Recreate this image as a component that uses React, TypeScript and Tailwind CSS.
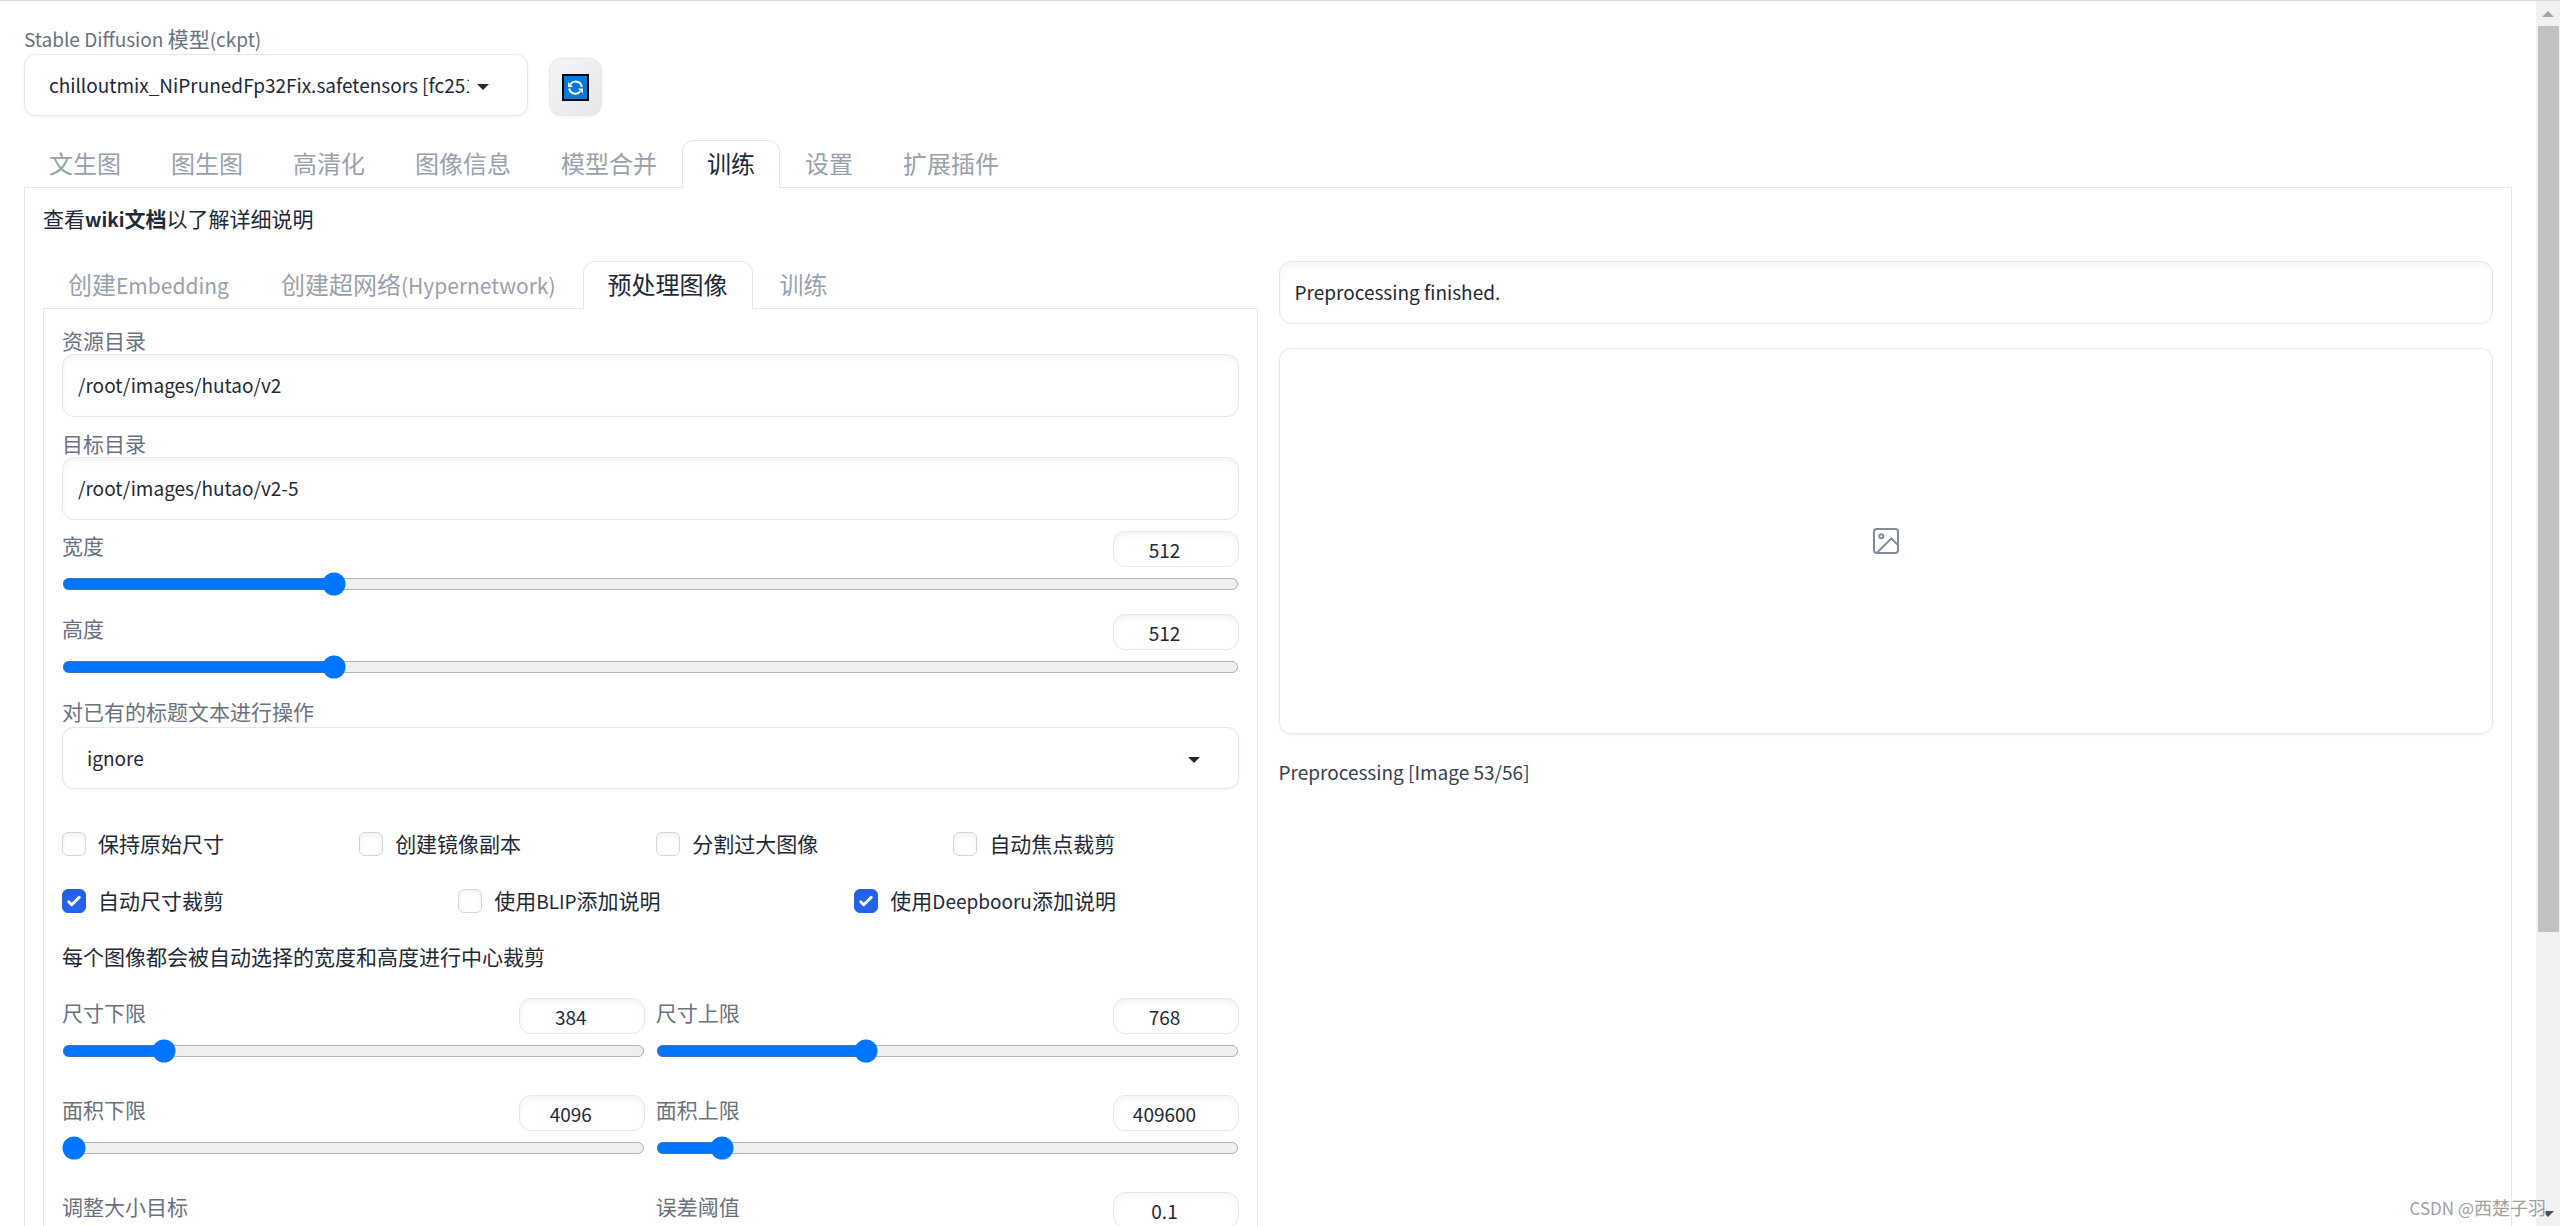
import { useState } from 'react';
import type { ReactNode } from 'react';
import clsx from 'clsx';

const mainTabs = ['文生图', '图生图', '高清化', '图像信息', '模型合并', '训练', '设置', '扩展插件'];
const trainTabs = ['创建Embedding', '创建超网络(Hypernetwork)', '预处理图像', '训练'];

const optionRows = [
    {
        cols: 'grid-cols-4',
        items: [
            { label: '保持原始尺寸', checked: false },
            { label: '创建镜像副本', checked: false },
            { label: '分割过大图像', checked: false },
            { label: '自动焦点裁剪', checked: false },
        ],
    },
    {
        cols: 'grid-cols-3',
        items: [
            { label: '自动尺寸裁剪', checked: true },
            { label: '使用BLIP添加说明', checked: false },
            { label: '使用Deepbooru添加说明', checked: true },
        ],
    },
];

// Latin runs are set slightly smaller than the Chinese around them
const Mixed = ({ text, latin = 'text-[19px]' }: { text: string; latin?: string }) => (
    <>
        {text.split(/([\x20-\x7e]+)/).map((part, idx) => (
            idx % 2 ? <span key={idx} className={clsx('leading-none', latin)}>{part}</span> : part
        ))}
    </>
);

type TabsProps = { items: string[]; active: string; onSelect: (tab: string) => void; className?: string };

const Tabs = ({ items, active, onSelect, className }: TabsProps) => (
    <div role="tablist" className={clsx('relative z-10 -mb-px flex', className)}>
        {items.map((tab) => (
            <button
                key={tab}
                role="tab"
                aria-selected={tab === active}
                onClick={() => onSelect(tab)}
                className={clsx(
                    'h-12 px-6 pb-1 text-2xl leading-none rounded-t-xl border border-b-0 whitespace-nowrap',
                    tab === active ? 'border-gray-200 bg-white text-gray-800' : 'border-transparent text-gray-400'
                )}
            >
                <Mixed text={tab} latin="text-[21px]" />
            </button>
        ))}
    </div>
);

const TextField = ({ id, label, value }: { id: string; label: string; value: string }) => (
    <div className="flex flex-col">
        <label htmlFor={id} className="leading-7 text-gray-500"><Mixed text={label} /></label>
        <input
            id={id}
            type="text"
            defaultValue={value}
            className="h-[63px] w-full rounded-xl border border-gray-200 bg-white px-[15px] pb-0.5 text-[19px] text-gray-800 shadow-[inset_0_3px_6px_rgba(0,0,0,0.05)]"
        />
    </div>
);

const SelectField = ({ id, label, options }: { id: string; label: string; options: string[] }) => (
    <div className="flex flex-col">
        <label htmlFor={id} className="pb-0.5 leading-7 text-gray-500"><Mixed text={label} /></label>
        <div className="relative">
            <select
                id={id}
                className="h-[62px] w-full appearance-none rounded-xl border border-gray-200 bg-white pl-6 pr-[58px] text-[19px] text-gray-800 shadow-[0_1px_3px_rgba(0,0,0,0.06)]"
            >
                {options.map((option) => <option key={option}>{option}</option>)}
            </select>
            <svg viewBox="0 0 12 6" className="pointer-events-none absolute right-[39px] top-[30px] h-1.5 w-3 fill-gray-800">
                <path d="M0 0h12L6 6z" />
            </svg>
        </div>
    </div>
);

type SliderProps = { id: string; label: string; value: number; min?: number; max: number; step?: number };

const SliderField = ({ id, label, value: initial, min = 0, max, step = 1 }: SliderProps) => {
    const [value, setValue] = useState(initial);

    return (
        <div className="flex flex-col gap-[5px]">
            <div className="flex items-start justify-between">
                <label htmlFor={id} className="leading-7 text-gray-500">{label}</label>
                <input
                    type="number"
                    aria-label={label}
                    value={value}
                    step={step}
                    onChange={(e) => setValue(Number(e.target.value))}
                    className="h-9 w-[126px] appearance-none rounded-xl border border-gray-200 bg-white pl-0 pr-[22px] text-center text-[19px] text-gray-800 shadow-[inset_0_3px_6px_rgba(0,0,0,0.05)] [-moz-appearance:textfield] [&::-webkit-inner-spin-button]:appearance-none"
                />
            </div>
            <input
                id={id}
                type="range"
                min={min}
                max={max}
                step={step}
                value={value}
                onChange={(e) => setValue(Number(e.target.value))}
                className="block h-4 w-full [zoom:1.5]"
            />
        </div>
    );
};

const CheckOption = ({ label, checked }: { label: string; checked: boolean }) => (
    <label className="flex h-6 items-center gap-3 whitespace-nowrap leading-6">
        <span className="grid size-6 shrink-0">
            <input
                type="checkbox"
                defaultChecked={checked}
                className="peer col-start-1 row-start-1 size-6 appearance-none rounded-md border border-gray-300 bg-white shadow-[inset_0_3px_6px_rgba(0,0,0,0.05)] checked:border-[#2563eb] checked:bg-[#2563eb]"
            />
            <svg viewBox="0 0 16 16" className="pointer-events-none invisible col-start-1 row-start-1 size-6 fill-white peer-checked:visible">
                <path d="M12.207 4.793a1 1 0 010 1.414l-5 5a1 1 0 01-1.414 0l-2-2a1 1 0 011.414-1.414L6.5 9.086l4.293-4.293a1 1 0 011.414 0z" />
            </svg>
        </span>
        <span className="pb-0.5"><Mixed text={label} /></span>
    </label>
);

const Panel = ({ className, children }: { className?: string; children: ReactNode }) => (
    <div className={clsx('flex-1 border border-b-0 border-gray-200 px-[18px]', className)}>{children}</div>
);

const RefreshIcon = () => (
    <svg viewBox="0 0 27 27" className="size-[27px]">
        <rect width="27" height="27" fill="#000" />
        <rect x="2" y="2" width="23" height="23" fill="#0078d7" />
        <g fill="none" stroke="#fff" strokeWidth="2">
            <path d="M8.5 10.2A6.3 6.3 0 0 1 19.8 13" />
            <path d="M7.2 14.5A6.3 6.3 0 0 0 18.3 17.3" />
        </g>
        <g fill="#fff">
            <path d="M6 8v5h5z" />
            <path d="M21 19.5v-5h-5z" />
        </g>
    </svg>
);

const ScrollBar = () => (
    <div aria-hidden="true" className="flex w-6 shrink-0 flex-col items-center bg-[#f1f1f1]">
        <div className="flex h-[25px] items-center">
            <svg viewBox="0 0 12 6" className="h-1.5 w-3 fill-[#a3a3a3]"><path d="M6 0l6 6H0z" /></svg>
        </div>
        <div className="flex w-full flex-1 flex-col pl-0.5 pr-px">
            <div className="h-[77%] bg-[#c1c1c1]" />
        </div>
        <div className="flex h-6 items-center">
            <svg viewBox="0 0 12 6" className="h-1.5 w-3 fill-[#505050]"><path d="M0 0h12L6 6z" /></svg>
        </div>
    </div>
);

export default function App() {
    const [mainTab, setMainTab] = useState('训练');
    const [trainTab, setTrainTab] = useState('预处理图像');

    return (
        <div className="relative flex h-screen overflow-hidden border-t border-[#d9d9d9] bg-white font-['Noto_Sans_CJK_SC',sans-serif] text-[21px] text-gray-800">
            <main className="flex min-w-0 flex-1 flex-col overflow-hidden px-6 pt-[23px]">
                <div className="flex items-end gap-[21px]">
                    <div className="w-[504px]">
                        <SelectField
                            id="checkpoint"
                            label="Stable Diffusion 模型(ckpt)"
                            options={['chilloutmix_NiPrunedFp32Fix.safetensors [fc2511737a]']}
                        />
                    </div>
                    <button
                        aria-label="刷新"
                        className="flex h-[58px] w-[53px] items-center justify-center rounded-xl border border-gray-200 bg-linear-to-br from-gray-100 to-gray-200 shadow-[0_1px_3px_rgba(0,0,0,0.06)]"
                    >
                        <RefreshIcon />
                    </button>
                </div>

                <div className="mt-6 flex flex-1 flex-col">
                    <Tabs items={mainTabs} active={mainTab} onSelect={setMainTab} />
                    <Panel className="flex flex-col gap-[29px] pt-4">
                        <p className="leading-7">
                            查看<a href="#wiki" className="font-bold"><Mixed text="wiki文档" /></a>以了解详细说明
                        </p>

                        <div className="flex flex-1 gap-[21px]">
                            <section className="flex flex-1 flex-col">
                                <Tabs items={trainTabs} active={trainTab} onSelect={setTrainTab} className="gap-0.5" />
                                <Panel className="pt-[17px]">
                                    <div className="flex flex-col gap-3">
                                        <TextField id="source-dir" label="资源目录" value="/root/images/hutao/v2" />
                                        <TextField id="target-dir" label="目标目录" value="/root/images/hutao/v2-5" />
                                    </div>

                                    <div className="mt-[11px] flex flex-col gap-[18px]">
                                        <SliderField id="width" label="宽度" value={512} min={64} max={2048} />
                                        <SliderField id="height" label="高度" value={512} min={64} max={2048} />
                                        <SelectField id="caption-action" label="对已有的标题文本进行操作" options={['ignore', 'copy', 'prepend', 'append']} />
                                    </div>

                                    <div className="mt-[43px] flex flex-col gap-[33px]">
                                        {optionRows.map((row) => (
                                            <div key={row.cols} className={clsx('grid gap-3', row.cols)}>
                                                {row.items.map((item) => <CheckOption key={item.label} {...item} />)}
                                            </div>
                                        ))}
                                    </div>

                                    <p className="mt-[29px] leading-7">每个图像都会被自动选择的宽度和高度进行中心裁剪</p>

                                    <div className="mt-7 grid grid-cols-2 gap-x-[11px] gap-y-8">
                                        <SliderField id="min-size" label="尺寸下限" value={384} min={64} max={2048} />
                                        <SliderField id="max-size" label="尺寸上限" value={768} min={64} max={2048} />
                                        <SliderField id="min-area" label="面积下限" value={4096} min={4096} max={4194304} />
                                        <SliderField id="max-area" label="面积上限" value={409600} min={4096} max={4194304} />
                                        <span className="leading-7 text-gray-500">调整大小目标</span>
                                        <SliderField id="threshold" label="误差阈值" value={0.1} max={1} step={0.01} />
                                    </div>
                                </Panel>
                            </section>

                            <section className="flex flex-1 flex-col">
                                <input
                                    type="text"
                                    aria-label="输出"
                                    readOnly
                                    value="Preprocessing finished."
                                    className="h-[63px] w-full shrink-0 rounded-xl border border-gray-200 bg-white px-[15px] pb-0.5 text-[19px] text-gray-800 shadow-[inset_0_3px_6px_rgba(0,0,0,0.05)]"
                                />
                                <div className="mt-6 flex h-[386px] items-center justify-center rounded-xl border border-gray-200 shadow-[0_1px_3px_rgba(0,0,0,0.06)]">
                                    <svg viewBox="0 0 24 24" className="size-8 fill-none stroke-[#858b97] stroke-[1.5]" strokeLinecap="round" strokeLinejoin="round">
                                        <rect x="3" y="3" width="18" height="18" rx="2" ry="2" />
                                        <circle cx="8.5" cy="8.5" r="1.5" />
                                        <polyline points="21 15 16 10 5 21" />
                                    </svg>
                                </div>
                                <p className="mt-6 text-[19px] leading-7 text-gray-700">Preprocessing [Image 53/56]</p>
                            </section>
                        </div>
                    </Panel>
                </div>
            </main>
            <ScrollBar />
            <span className="absolute bottom-[5px] right-3.5 text-[18px] leading-7 text-[#a0a0a0] [text-shadow:1px_1px_0_#fff]">
                <Mixed text="CSDN @西楚子羽" latin="text-[17px]" />
            </span>
        </div>
    );
}
